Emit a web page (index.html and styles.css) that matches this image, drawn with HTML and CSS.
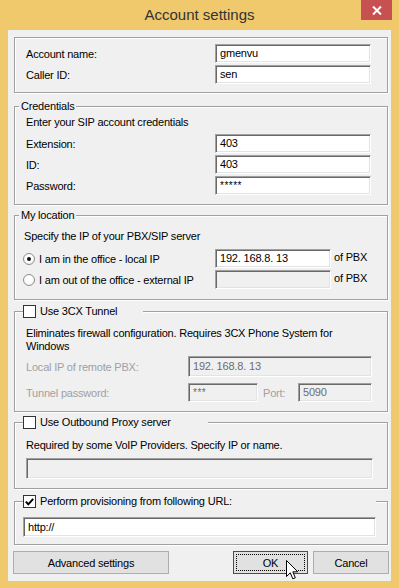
FILE: index.html
```html
<!DOCTYPE html>
<html lang="en">
<head>
    <meta charset="UTF-8">
    <meta name="viewport" content="width=device-width, initial-scale=1.0">
    <title>Account settings</title>
    <link rel="stylesheet" href="styles.css">
</head>
<body>
<div class="window">
    <div class="titlebar">
        <span></span>
        <span class="title">Account settings</span>
        <span class="close">
            <svg width="10" height="9" viewBox="0 0 10 9"><path d="M1 0.5 L9 8.5 M9 0.5 L1 8.5" stroke="#fff" stroke-width="2"/></svg>
        </span>
    </div>

    <div class="client">
        <!-- Account -->
        <div class="group g-account">
            <div class="row"><span>Account name:</span><span class="edit">gmenvu</span></div>
            <div class="row"><span>Caller ID:</span><span class="edit">sen</span></div>
        </div>

        <!-- Credentials -->
        <div class="group g-cred">
            <div class="caption text-cap">Credentials</div>
            <div class="note">Enter your SIP account credentials</div>
            <div class="rows">
                <div class="row"><span>Extension:</span><span class="edit">403</span></div>
                <div class="row"><span>ID:</span><span class="edit">403</span></div>
                <div class="row"><span>Password:</span><span class="edit stars">*****</span></div>
            </div>
        </div>

        <!-- My location -->
        <div class="group g-loc">
            <div class="caption text-cap">My location</div>
            <div class="note">Specify the IP of your PBX/SIP server</div>
            <div class="rows">
                <div class="row radio-row">
                    <span class="opt"><span class="radio checked"></span>I am in the office - local IP</span>
                    <span class="edit">192.<i class="gap"></i>168.8.<i class="gap"></i>13</span>
                    <span class="unit">of PBX</span>
                </div>
                <div class="row radio-row">
                    <span class="opt"><span class="radio"></span>I am out of the office - external IP</span>
                    <span class="edit off"></span>
                    <span class="unit">of PBX</span>
                </div>
            </div>
        </div>

        <!-- 3CX tunnel -->
        <div class="group g-tunnel">
            <div class="caption check-cap"><span class="check"></span>Use 3CX Tunnel</div>
            <div class="note">Eliminates firewall configuration. Requires 3CX Phone System for Windows</div>
            <div class="row tunnel-ip"><span class="dim">Local IP of remote PBX:</span><span class="edit off">192.<i class="gap"></i>168.8.<i class="gap"></i>13</span></div>
            <div class="row tunnel-pw">
                <span class="dim">Tunnel password:</span>
                <span class="edit off stars">***</span>
                <span class="dim port">Port:</span>
                <span class="edit off">5090</span>
            </div>
        </div>

        <!-- Outbound proxy -->
        <div class="group g-proxy">
            <div class="caption check-cap"><span class="check"></span>Use Outbound Proxy server</div>
            <div class="note">Required by some VoIP Providers. Specify IP or name.</div>
            <span class="edit off wide"></span>
        </div>

        <!-- Provisioning -->
        <div class="group g-prov">
            <div class="caption check-cap"><span class="check on">
                <svg width="9" height="8" viewBox="0 0 9 8"><path d="M0.8 3.6 L3.3 6.3 L8.2 0.8" fill="none" stroke="#000" stroke-width="2"/></svg>
            </span>Perform provisioning from following URL:</div>
            <span class="edit wide">http://</span>
        </div>

        <div class="buttons">
            <span class="btn btn-adv">Advanced settings</span>
            <span class="btn btn-ok"><span class="focus">OK</span></span>
            <span class="btn btn-cancel">Cancel</span>
        </div>
    </div>

    <svg class="cursor" width="13" height="21" viewBox="0 0 13 21"><path d="M0.5 0.5 L0.5 16.5 L4.3 12.8 L6.8 18.8 L9.3 17.8 L6.8 11.8 L11.8 11.8 Z" fill="#fff" stroke="#000" stroke-width="1" stroke-linejoin="miter"/></svg>
</div>
</body>
</html>
```

FILE: styles.css
```css
body {
    margin: 0;
    font-family: "Liberation Sans", Arial, sans-serif;
    font-size: 11px;
    letter-spacing: -0.2px;
    color: #000;
    background: #fff;
}
.window {
    position: relative;
    width: 399px;
    height: 588px;
    box-sizing: border-box;
    padding: 0 8px 7px 8px;
    background: #f0c96c;
    display: flex;
    flex-direction: column;
}
.titlebar {
    height: 30px;
    margin: 0 -8px;
    display: grid;
    grid-template-columns: 1fr auto 1fr;
    align-items: start;
}
.title {
    font-size: 15px;
    line-height: 30px;
    letter-spacing: 0;
    color: #333;
}
.close {
    justify-self: end;
    width: 31px;
    height: 20px;
    margin-right: 7px;
    background: #c75050;
    display: flex;
    align-items: center;
    justify-content: center;
}
.client {
    flex: 1;
    background: #f0f0f0;
    display: flex;
    flex-direction: column;
}

/* group boxes */
.group {
    border: 1px solid #a0a0a0;
    box-shadow: inset 1px 1px #fff, 1px 1px #fff;
    margin: 0 3px 0 6px;
    padding: 0 16px 0 11px;
}
.caption {
    height: 13px;
    line-height: 13px;
    margin-top: -7px;
    background: #f0f0f0;
    display: flex;
    align-items: center;
    box-sizing: border-box;
}
.text-cap {
    width: fit-content;
    padding: 0 2px;
    margin-left: -7px;
}
.check-cap {
    margin-left: -3px;
    gap: 4px;
}
.note {
    line-height: 13px;
}
.row {
    display: grid;
    grid-template-columns: 1fr 156px;
    align-items: center;
    height: 19px;
}
.row + .row {
    margin-top: 2px;
}

/* edit boxes */
.edit {
    display: block;
    height: 19px;
    box-sizing: border-box;
    border: 1px solid;
    border-color: #a0a0a0 #fff #fff #a0a0a0;
    box-shadow: inset 1px 1px #696969, inset -1px -1px #e3e3e3;
    background: #fff;
    padding: 0 4px;
    line-height: 17px;
    white-space: nowrap;
}
.edit.off {
    background: #f0f0f0;
    color: #6d6d6d;
}
.stars {
    font-size: 10px;
    letter-spacing: 0.5px;
}
.gap {
    display: inline-block;
    width: 3px;
}
.dim {
    color: #a0a0a0;
}

.g-account {
    margin-top: 7px;
    padding-top: 6px;
    padding-bottom: 8px;
}
.g-cred {
    margin-top: 13px;
    padding-bottom: 9px;
}
.g-cred .note {
    margin-top: 3px;
}
.g-cred .rows {
    margin-top: 5px;
}

.g-loc {
    margin-top: 10px;
    padding-left: 8px;
    padding-bottom: 10px;
}
.g-loc .text-cap {
    margin-left: -4px;
}
.g-loc .note {
    margin-top: 8px;
    margin-left: 1px;
}
.g-loc .rows {
    margin-top: 6px;
}
.radio-row {
    grid-template-columns: 1fr 116px 40px;
}
.opt {
    display: flex;
    align-items: center;
    gap: 4px;
}
.radio {
    width: 12px;
    height: 12px;
    box-sizing: border-box;
    border-radius: 50%;
    border: 1px solid #8e8e8e;
    background: radial-gradient(circle at 50% 40%, #fff 40%, #e6e6e6);
    display: flex;
    align-items: center;
    justify-content: center;
}
.radio.checked::after {
    content: "";
    width: 4px;
    height: 4px;
    border-radius: 50%;
    background: #111;
}
.unit {
    padding-left: 3px;
    align-self: start;
    line-height: 16px;
}

.g-tunnel {
    margin-top: 11px;
    padding-right: 15px;
    padding-bottom: 9px;
}
.check-cap {
    width: 120px;
}
.check {
    width: 13px;
    height: 13px;
    box-sizing: border-box;
    border: 1px solid #333;
    background: #fff;
    display: flex;
    align-items: center;
    justify-content: center;
    flex: none;
}
.g-tunnel .note {
    margin-top: 9px;
}
.tunnel-ip {
    grid-template-columns: 1fr 184px;
    height: 21px;
    margin-top: 3px;
}
.tunnel-ip .edit {
    height: 21px;
    line-height: 19px;
}
.row.tunnel-pw {
    grid-template-columns: 1fr 70px 40px 74px;
    margin-top: 6px;
}
.port {
    padding-left: 5px;
}

.g-proxy {
    margin-top: 10px;
    padding-right: 14px;
    padding-bottom: 9px;
}
.g-proxy .check-cap {
    width: 185px;
}
.g-proxy .note {
    margin-top: 10px;
}
.wide {
    height: 21px;
    margin-top: 6px;
}

.g-prov {
    margin-top: 12px;
    padding-left: 8px;
    padding-right: 11px;
    padding-bottom: 7px;
}
.g-prov .check-cap {
    width: 353px;
    margin-left: 0;
}
.g-prov .wide {
    height: 20px;
    line-height: 18px;
    margin-top: 9px;
}

/* buttons */
.buttons {
    display: flex;
    margin: 6px 2px 0 5px;
}
.btn {
    height: 23px;
    box-sizing: border-box;
    border: 1px solid #adadad;
    background: #e1e1e1;
    display: flex;
    align-items: center;
    justify-content: center;
}
.btn-adv {
    width: 156px;
    margin-right: auto;
}
.btn-ok {
    width: 75px;
    border-color: #4d4d4d;
    padding: 2px;
}
.focus {
    flex: 1;
    align-self: stretch;
    border: 1px dotted #000;
    display: flex;
    align-items: center;
    justify-content: center;
}
.btn-cancel {
    width: 76px;
    margin-left: 5px;
}

.cursor {
    position: absolute;
    left: 286px;
    top: 560px;
}
```
